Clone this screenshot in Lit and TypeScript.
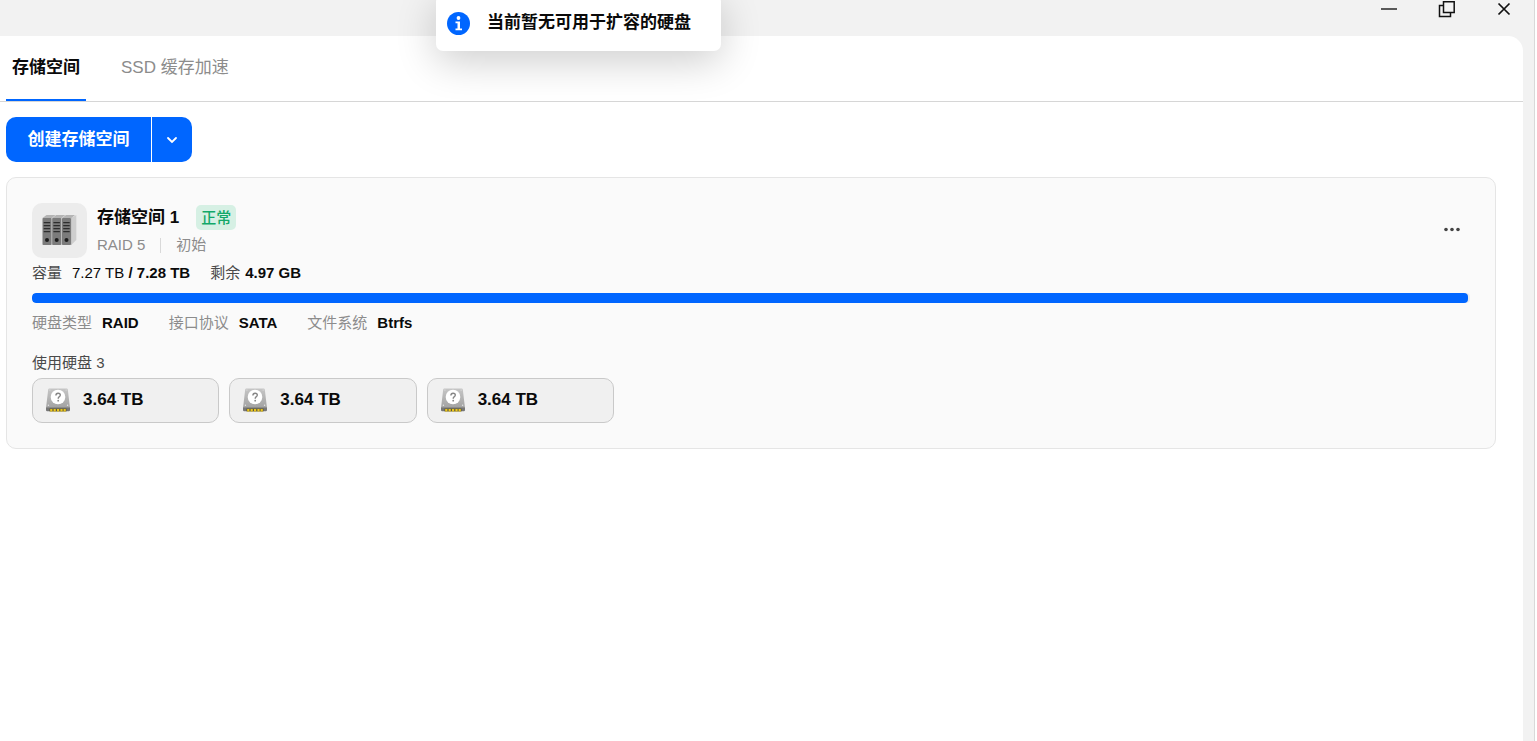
import { LitElement, html, css, svg } from "lit";
import { customElement, property, state } from "lit/decorators.js";
import { classMap } from "lit/directives/class-map.js";

interface Disk {
  size: string;
}

@customElement("disk-chip")
class DiskChip extends LitElement {
  @property() size = "";

  static styles = css`
    :host {
      display: block;
    }
    .chip {
      display: flex;
      align-items: center;
      gap: 13px;
      width: 100%;
      height: 45px;
      padding: 0 13px 2px;
      box-sizing: border-box;
      border: 1px solid #c9c9c9;
      border-radius: 10px;
      background: #f0f0f0;
      color: #0a0a0a;
      font: 600 17px/24px "Liberation Sans", "Noto Sans CJK SC", sans-serif;
      cursor: pointer;
    }
    .icon {
      display: block;
      flex: none;
      width: 24px;
      height: 24px;
    }
  `;

  render() {
    return html`
      <button class="chip" type="button">
        <svg class="icon" viewBox="0 0 24 24" aria-hidden="true">
          <defs>
            <linearGradient id="metal" x1="0" y1="0" x2="0" y2="1">
              <stop offset="0" stop-color="#c6c6c6" />
              <stop offset="1" stop-color="#a2a2a2" />
            </linearGradient>
          </defs>
          <path d="M3.4 0.4h17.2q1 0 1.200 1L24 20H0L2.200 1.400q.2-1 1.200-1z" fill="url(#metal)" />
          <path d="M0 19.500h24v2.500q0 1.200-1.200 1.200h-21.600Q0 23.200 0 22z" fill="#777" />
          <path d="M3.500 20.600h17v2.800h-17z" fill="#5f5832" />
          <path d="M4.200 21h2.200v2.400H4.200zM7.600 21h2.200v2.400H7.600zM11 21h2.200v2.400H11zM14.400 21h2.200v2.400h-2.200zM17.600 21h2.200v2.400h-2.200z" fill="#eac51e" />
          <circle cx="12" cy="9" r="7.300" fill="#fff" />
          <g fill="#e4e4e4">
            <circle cx="3.900" cy="2" r=".6" />
            <circle cx="20.100" cy="2" r=".6" />
            <circle cx="2.400" cy="17.300" r=".7" />
            <circle cx="21.600" cy="17.300" r=".7" />
          </g>
          <path d="M9.900 7.400q0-2.200 2.200-2.200t2.200 1.900q0 1.100-1.200 1.800-.9.600-.9 1.800" fill="none" stroke="#858585" stroke-width="1.400" />
          <circle cx="12.200" cy="12.700" r=".9" fill="#858585" />
        </svg>
        <span>${this.size}</span>
      </button>
    `;
  }
}

@customElement("storage-card")
class StorageCard extends LitElement {
  @property() name = "";
  @property({ attribute: false }) disks: Disk[] = [];

  static styles = css`
    :host {
      display: block;
    }
    .card {
      display: flex;
      flex-direction: column;
      padding: 25px;
      border: 1px solid #e5e5e5;
      border-radius: 10px;
      background: #fafafa;
      font-size: 15px;
      line-height: 20px;
    }
    .head {
      display: flex;
      align-items: flex-start;
      gap: 10px;
    }
    .badge {
      display: grid;
      place-items: center;
      width: 55px;
      height: 55px;
      box-sizing: border-box;
      padding-bottom: 2px;
      border-radius: 10px;
      background: #ececec;
    }
    .badge svg {
      display: block;
      width: 35px;
      height: 32px;
    }
    .titles {
      flex: 1;
      display: flex;
      flex-direction: column;
      gap: 5px;
      padding-top: 2px;
    }
    .title {
      display: flex;
      align-items: center;
      gap: 17px;
    }
    h2 {
      margin: 0;
      font-size: 17px;
      line-height: 25px;
      font-weight: 600;
      color: #0a0a0a;
    }
    .status {
      padding: 0 5px;
      border-radius: 5px;
      background: #d6f0e4;
      color: #12a869;
      line-height: 25px;
      font-weight: 500;
    }
    .meta {
      display: flex;
      align-items: center;
      color: #8c8c8c;
    }
    .meta span + span {
      margin-left: 15px;
      padding-left: 16px;
      background: linear-gradient(#d9d9d9, #d9d9d9) left center / 1px 15px no-repeat;
    }
    .more {
      display: grid;
      place-items: center;
      width: 35px;
      height: 53px;
      padding: 0;
      border: 0;
      background: none;
      cursor: pointer;
    }
    .more svg {
      display: block;
    }
    .capacity {
      display: flex;
      gap: 20px;
      padding: 5px 0 10px;
      color: #4a4a4a;
    }
    .capacity div {
      display: flex;
      gap: 5px;
    }
    .used {
      padding-left: 5px;
      color: #0a0a0a;
    }
    b {
      font-weight: 600;
      color: #0a0a0a;
    }
    progress {
      display: block;
      appearance: none;
      width: 100%;
      height: 10px;
      border: 0;
      border-radius: 4px;
      overflow: hidden;
      background: #ececec;
    }
    progress::-webkit-progress-bar {
      background: #ececec;
    }
    progress::-webkit-progress-value {
      border-radius: 4px;
      background: #0066ff;
    }
    .facts {
      display: flex;
      gap: 30px;
      margin: 0;
      padding: 10px 0 20px;
      color: #8c8c8c;
    }
    .facts div {
      display: flex;
      gap: 10px;
    }
    dd {
      margin: 0;
      font-weight: 600;
      color: #0a0a0a;
    }
    h3 {
      margin: 0;
      padding-bottom: 5px;
      font-size: 15px;
      line-height: 20px;
      font-weight: 400;
      color: #4a4a4a;
    }
    .disks {
      display: grid;
      grid-template-columns: repeat(3, 1fr);
      gap: 10px;
      max-width: 582px;
    }
  `;

  private tower(x: number) {
    return svg`
      <path d="M${x} 4l4-3h9l-3.500 3z" fill="#b4b4b4" />
      <path d="M${x + 9} 4l1-.5v27l-1 .5z" fill="#c4c4c4" />
      <rect x=${x} y="4" width="9" height="27" rx=".8" fill="#7b7b7b" />
      <path d="M${x + 1.2} 8.600h6.500M${x + 1.2} 11.600h6.500M${x + 1.2} 14.600h6.500M${x + 1.2} 17.600h6.500" stroke="#2d2d2d" stroke-width="1.300" />
      <circle cx=${x + 4.500} cy="26" r="2" fill="#1c1c1c" />
    `;
  }

  render() {
    return html`
      <article class="card">
        <header class="head">
          <div class="badge">
            <svg viewBox="0 0 35 32" aria-hidden="true">
              <path d="M29.200 4L34.300 1v25l-5.100 5z" fill="#cecece" />
              ${[0.5, 10.2, 20].map((x) => this.tower(x))}
            </svg>
          </div>
          <div class="titles">
            <div class="title">
              <h2>${this.name}</h2>
              <span class="status">正常</span>
            </div>
            <div class="meta"><span>RAID 5</span><span>初始</span></div>
          </div>
          <button class="more" type="button" aria-label="更多">
            <svg width="17" height="5" viewBox="0 0 17 5" fill="#444" aria-hidden="true">
              <circle cx="2" cy="2.500" r="1.800" />
              <circle cx="8" cy="2.500" r="1.800" />
              <circle cx="14" cy="2.500" r="1.800" />
            </svg>
          </button>
        </header>
        <div class="capacity">
          <div><span>容量</span><span class="used">7.27 TB <b>/ 7.28 TB</b></span></div>
          <div><span>剩余</span><b>4.97 GB</b></div>
        </div>
        <progress value="7.27" max="7.28" aria-label="容量"></progress>
        <dl class="facts">
          <div><dt>硬盘类型</dt><dd>RAID</dd></div>
          <div><dt>接口协议</dt><dd>SATA</dd></div>
          <div><dt>文件系统</dt><dd>Btrfs</dd></div>
        </dl>
        <h3>使用硬盘 ${this.disks.length}</h3>
        <div class="disks">
          ${this.disks.map((d) => html`<disk-chip .size=${d.size}></disk-chip>`)}
        </div>
      </article>
    `;
  }
}

@customElement("app-root")
class AppRoot extends LitElement {
  @state() private tab = 0;

  private tabs = ["存储空间", "SSD 缓存加速"];
  private disks: Disk[] = [{ size: "3.64 TB" }, { size: "3.64 TB" }, { size: "3.64 TB" }];

  static styles = css`
    :host {
      display: block;
      font-family: "Liberation Sans", "Noto Sans CJK SC", sans-serif;
      color: #0a0a0a;
    }
    .window {
      position: relative;
      display: flex;
      flex-direction: column;
      min-height: 100vh;
      box-sizing: border-box;
      margin-right: 2px;
      padding-right: 11px;
      border-right: 1px solid #d9d9d9;
      background: #f2f2f2;
    }
    .controls {
      display: flex;
      justify-content: flex-end;
      gap: 34px;
      height: 36px;
      padding-right: 7px;
    }
    .controls button {
      display: block;
      width: 24px;
      height: 20px;
      padding: 0;
      border: 0;
      background: none;
    }
    .controls svg {
      display: block;
      fill: none;
      stroke: #111;
    }
    .panel {
      flex: 1;
      border-top-right-radius: 15px;
      background: #fff;
    }
    .tabs {
      display: flex;
      gap: 30px;
      height: 65px;
      padding-left: 6px;
      border-bottom: 1px solid #d6d6d6;
    }
    .tab {
      min-width: 80px;
      padding: 0 5px;
      border: 0;
      border-bottom: 2px solid transparent;
      background: none;
      color: #8c8c8c;
      font: 400 17px/24px "Liberation Sans", "Noto Sans CJK SC", sans-serif;
      cursor: pointer;
    }
    .tab.active {
      border-color: #0066ff;
      color: #0a0a0a;
      font-weight: 600;
    }
    .content {
      display: flex;
      flex-direction: column;
      align-items: flex-start;
      gap: 15px;
      padding: 15px 27px 15px 6px;
    }
    .split {
      display: flex;
      gap: 1px;
      height: 45px;
      border-radius: 10px;
      overflow: hidden;
    }
    .split button {
      display: grid;
      place-items: center;
      min-width: 145px;
      padding: 0 20px;
      border: 0;
      background: #0066ff;
      color: #fff;
      font: 600 17px/24px "Liberation Sans", "Noto Sans CJK SC", sans-serif;
      cursor: pointer;
    }
    .split .arrow {
      min-width: 40px;
      padding: 0;
    }
    storage-card {
      align-self: stretch;
    }
    .toast {
      position: absolute;
      top: -5px;
      left: 436px;
      display: flex;
      align-items: center;
      gap: 17px;
      height: 56px;
      min-width: 285px;
      box-sizing: border-box;
      padding: 0 11px;
      border-radius: 7px;
      background: #fff;
      box-shadow: 0 10px 40px rgba(0, 0, 0, 0.2);
      font-size: 17px;
      line-height: 24px;
      font-weight: 600;
    }
    .toast svg {
      display: block;
    }
  `;

  render() {
    return html`
      <main class="window">
        <div class="controls">
          <button type="button" aria-label="最小化">
            <svg width="24" height="20" viewBox="0 0 24 20"><path d="M5 9h16" stroke="#333" stroke-width="1.600" /></svg>
          </button>
          <button type="button" aria-label="还原">
            <svg width="24" height="20" viewBox="0 0 24 20" stroke-width="1.500">
              <path d="M9.500 1.700h10.700v10.700H9.500zM9 5.500H5.500v11h11V13" />
            </svg>
          </button>
          <button type="button" aria-label="关闭">
            <svg width="24" height="20" viewBox="0 0 24 20"><path d="M6.500 3.500l11 11M17.500 3.500l-11 11" stroke-width="1.700" /></svg>
          </button>
        </div>
        <section class="panel">
          <nav class="tabs" role="tablist">
            ${this.tabs.map(
              (t, i) => html`<button
                type="button"
                role="tab"
                aria-selected=${i === this.tab ? "true" : "false"}
                class=${classMap({ tab: true, active: i === this.tab })}
                @click=${() => (this.tab = i)}
              >${t}</button>`
            )}
          </nav>
          <div class="content">
            <div class="split">
              <button type="button">创建存储空间</button>
              <button type="button" class="arrow" aria-label="更多选项">
                <svg width="12" height="8" viewBox="0 0 12 8" fill="none" stroke="#fff" stroke-width="1.800" stroke-linecap="round">
                  <path d="M2 2l4 4 4-4" />
                </svg>
              </button>
            </div>
            <storage-card .name=${"存储空间 1"} .disks=${this.disks}></storage-card>
          </div>
        </section>
        <div class="toast" role="status">
          <svg width="23" height="23" viewBox="0 0 23 23" aria-hidden="true">
            <circle cx="11.500" cy="11.500" r="11.500" fill="#0066ff" />
            <circle cx="11.500" cy="6" r="1.900" fill="#fff" />
            <path d="M8.500 9.500h4.500v7h2v1.700H8.500v-1.700h2v-5.300h-2z" fill="#fff" />
          </svg>
          <span>当前暂无可用于扩容的硬盘</span>
        </div>
      </main>
    `;
  }
}
